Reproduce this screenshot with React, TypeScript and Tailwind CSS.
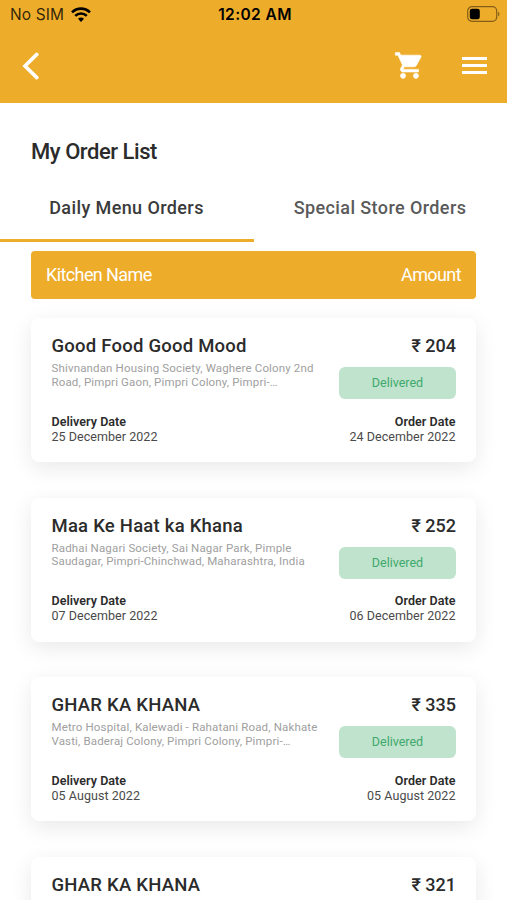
import React from "react";

interface Order {
  id: number;
  kitchen: string;
  address: string[];
  amount: number;
  status: string;
  deliveryDate: string;
  orderDate: string;
}

const orders: Order[] = [
  {
    id: 1,
    kitchen: "Good Food Good Mood",
    address: ["Shivnandan Housing Society, Waghere Colony 2nd", "Road, Pimpri Gaon, Pimpri Colony, Pimpri-…"],
    amount: 204,
    status: "Delivered",
    deliveryDate: "25 December 2022",
    orderDate: "24 December 2022",
  },
  {
    id: 2,
    kitchen: "Maa Ke Haat ka Khana",
    address: ["Radhai Nagari Society, Sai Nagar Park, Pimple", "Saudagar, Pimpri-Chinchwad, Maharashtra, India"],
    amount: 252,
    status: "Delivered",
    deliveryDate: "07 December 2022",
    orderDate: "06 December 2022",
  },
  {
    id: 3,
    kitchen: "GHAR KA KHANA",
    address: ["Metro Hospital, Kalewadi - Rahatani Road, Nakhate", "Vasti, Baderaj Colony, Pimpri Colony, Pimpri-…"],
    amount: 335,
    status: "Delivered",
    deliveryDate: "05 August 2022",
    orderDate: "05 August 2022",
  },
  {
    id: 4,
    kitchen: "GHAR KA KHANA",
    address: ["Metro Hospital, Kalewadi - Rahatani Road, Nakhate", "Vasti, Baderaj Colony, Pimpri Colony, Pimpri-…"],
    amount: 321,
    status: "Delivered",
    deliveryDate: "04 August 2022",
    orderDate: "04 August 2022",
  },
];

const StatusBar: React.FC = () => (
  <div className="flex h-[30px] items-center font-['Inter',sans-serif] text-black">
    <div className="flex flex-1 items-center gap-[7px] pl-[10px]">
      <span className="text-[15.5px] leading-5 tracking-[0.1px] text-black/80">No SIM</span>
      <svg width="20" height="15" viewBox="0 0 20 15" fill="none" stroke="black" strokeWidth="2.6" className="mb-[1px]">
        <path d="M1 5.4C6.1 0.3 13.9 0.3 19 5.4" />
        <path d="M4.2 8.9C7.5 5.7 12.5 5.7 15.8 8.9" />
        <path d="M10 14.9L7 11.8C8.7 10.1 11.3 10.1 13 11.8Z" fill="black" stroke="none" />
      </svg>
    </div>
    <span className="text-[15.5px] leading-5 font-semibold tracking-[0.4px]">12:02 AM</span>
    <div className="flex flex-1 justify-end pr-[7px]">
      <svg width="33" height="16" viewBox="0 0 33 16" fill="none" className="mb-[2px]">
        <rect x="0.7" y="0.7" width="29" height="14.6" rx="4.3" stroke="black" strokeOpacity="0.45" strokeWidth="1.2" />
        <rect x="2.8" y="2.8" width="10" height="10.4" rx="2.3" fill="black" />
        <path d="M31.2 5.7C32.8 6.5 32.8 9.5 31.2 10.3Z" fill="black" fillOpacity="0.5" />
      </svg>
    </div>
  </div>
);

const NavBar: React.FC = () => (
  <div className="flex h-[73px] items-center justify-between pr-5 pl-[22px]">
    <button aria-label="Back" className="mb-[2px]">
      <svg width="18" height="28" viewBox="0 0 18 28" fill="none" stroke="white" strokeWidth="3.6" strokeLinecap="round">
        <path d="M14.8 2.4L3 14L14.8 25.6" />
      </svg>
    </button>
    <div className="flex items-center">
      <button aria-label="Cart" className="mr-[37px] mb-[2px]">
        <svg width="31" height="31" viewBox="0 0 24 24" fill="white" stroke="white" strokeWidth="0.5">
          <path d="M7 18c-1.1 0-1.99.9-1.99 2S5.9 22 7 22s2-.9 2-2-.9-2-2-2zM1 2v2h2l3.6 7.59-1.35 2.45c-.16.28-.25.61-.25.96 0 1.1.9 2 2 2h12v-2H7.42c-.14 0-.25-.11-.25-.25l.03-.12.9-1.63h7.45c.75 0 1.41-.41 1.75-1.03l3.58-6.49c.08-.14.12-.31.12-.48 0-.55-.45-1-1-1H5.21l-.94-2H1zm16 16c-1.1 0-1.99.9-1.99 2s.89 2 1.99 2 2-.9 2-2-.9-2-2-2z" />
        </svg>
      </button>
      <button aria-label="Menu" className="mb-[2px] flex w-[25px] flex-col gap-[4px]">
        <span className="h-[3px] bg-white" />
        <span className="h-[3px] bg-white" />
        <span className="h-[3px] bg-white" />
      </button>
    </div>
  </div>
);

const OrderCard: React.FC<{ order: Order }> = ({ order }) => (
  <div className="flex h-[144px] shrink-0 flex-col rounded-[8px] bg-white pr-[20px] pl-[20.5px] shadow-[0_6px_22px_rgba(0,0,0,0.09)]">
    <div className="flex justify-between pt-[16px]">
      <div>
        <h2 className="text-[18.5px] leading-6 font-medium tracking-[0.23px] whitespace-nowrap text-[#2b2b2b]">
          {order.kitchen}
        </h2>
        <p className="mt-[4px] text-[11.5px] leading-[13.5px] font-[450] tracking-[0.15px] whitespace-nowrap text-[#a0a0a0]">
          {order.address[0]}
          <br />
          {order.address[1]}
        </p>
      </div>
      <div className="flex flex-col items-end">
        <span className="text-[18px] leading-6 font-medium text-[#2b2b2b]">₹ {order.amount}</span>
        <span className="mt-[9px] flex h-[32px] w-[117px] items-center justify-center rounded-[6px] bg-[#bfe3cc] pt-[1px] text-[12.5px] text-[#3fa86c]">
          {order.status}
        </span>
      </div>
    </div>
    <div className="mt-[14.9px] flex justify-between text-[12.5px] leading-[15px] tracking-[0.05px] text-[#4a4a4a]">
      <div>
        <div className="font-semibold text-[#2b2b2b]">Delivery Date</div>
        <div>{order.deliveryDate}</div>
      </div>
      <div className="pr-[0.5px] text-right">
        <div className="font-semibold text-[#2b2b2b]">Order Date</div>
        <div>{order.orderDate}</div>
      </div>
    </div>
  </div>
);

export default function App() {
  return (
    <div className="flex h-[900px] w-[507px] flex-col overflow-hidden bg-white font-['Roboto','Noto_Sans',sans-serif]">
      <header className="shrink-0 bg-[#eeac2b]">
        <StatusBar />
        <NavBar />
      </header>

      <h1 className="mt-[34px] ml-[31px] text-[22px] leading-[30px] font-medium tracking-[-0.45px] text-[#2b2b2b]">
        My Order List
      </h1>

      {/* Tabs */}
      <div className="mt-[6px] flex shrink-0 text-center text-[18px] font-medium tracking-[0.4px]">
        <div className="h-[69px] w-[254px] border-b-3 border-[#eeac2b] pr-[1px] leading-[69px] text-[#3a3a3a]">
          Daily Menu Orders
        </div>
        <div className="h-[69px] flex-1 pr-[1px] leading-[69px] text-[#5a5a5a]">Special Store Orders</div>
      </div>

      {/* List header */}
      <div className="mx-[31px] mt-[9px] flex h-[48px] shrink-0 items-center justify-between rounded-[4px] bg-[#eeac2b] px-[15px] pb-[2px] text-[18px] font-[450] tracking-[-0.6px] text-white">
        <span>Kitchen Name</span>
        <span>Amount</span>
      </div>

      <div className="mx-[31px] mt-[19px] flex flex-col gap-[35.6px]">
        {orders.map((order) => (
          <OrderCard key={order.id} order={order} />
        ))}
      </div>
    </div>
  );
}
